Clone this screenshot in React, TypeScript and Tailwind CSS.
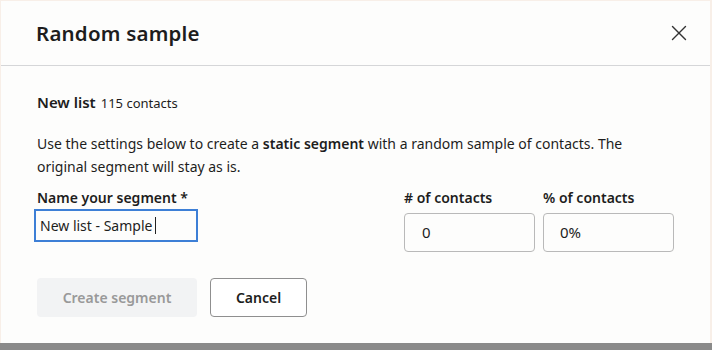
import React from "react";
import { X } from "lucide-react";

export default function App() {
  return (
    <div
      className="w-[712px] h-[350px] flex flex-col bg-[#f8efe8] overflow-hidden"
      style={{ fontFamily: "'Noto Sans', 'Open Sans', sans-serif" }}
    >
      <div className="flex-1 ml-[1px] mt-[1px] mr-[2px] bg-[#fdfdfc] flex flex-col text-[#1d1d1d]">
        {/* Header */}
        <div className="h-[65px] flex items-center justify-between pl-[35px] pr-[18px] border-b border-[#d5d6d8]">
          <h2 className="text-[20.5px] font-semibold tracking-[0.2px]">Random sample</h2>
          <button className="w-[26px] h-[26px] flex items-center justify-center text-[#333]">
            <X className="w-[26px] h-[26px]" strokeWidth={1.3} />
          </button>
        </div>

        {/* Body */}
        <div className="pl-[36px] pr-[36px] pt-[25px]">
          <div className="flex items-baseline gap-[5px] h-[22px]">
            <span className="text-[15px] font-semibold">New list</span>
            <span className="text-[13px]">115 contacts</span>
          </div>

          <p className="mt-[19px] text-[14px] leading-[23px] whitespace-nowrap">
            Use the settings below to create a <span className="font-semibold">static segment</span> with a random
            sample of contacts. The
            <br />
            original segment will stay as is.
          </p>

          <div className="mt-[10px] flex">
            <div className="w-[370px]">
              <label className="block text-[14px] font-semibold leading-[20px]">Name your segment *</label>
              <div className="mt-[1px] -ml-[3px] w-[164px] h-[33px] border-2 border-[#3d7fd6] flex items-center pl-[4px] text-[14px]">
                New list - Sample<span className="ml-[3px] w-[1px] h-[17px] bg-[#222]" />
              </div>
            </div>
            <div className="flex gap-[8px]">
              <div>
                <label className="block text-[14px] font-semibold leading-[20px]">&#35; of contacts</label>
                <div className="mt-[5px] w-[131px] h-[39px] border border-[#b9b9b9] rounded-[4px] flex items-center pl-[17px] text-[15px]">
                  0
                </div>
              </div>
              <div>
                <label className="block text-[14px] font-semibold leading-[20px]">% of contacts</label>
                <div className="mt-[5px] w-[131px] h-[39px] border border-[#b9b9b9] rounded-[4px] flex items-center pl-[16px] text-[15px]">
                  0%
                </div>
              </div>
            </div>
          </div>

          <div className="mt-[26px] flex gap-[13px]">
            <button className="w-[160px] h-[39px] rounded-[4px] bg-[#f2f3f4] text-[#999] text-[14px] font-semibold">
              Create segment
            </button>
            <button className="w-[97px] h-[39px] rounded-[4px] border border-[#8f8f8f] bg-white text-[14px] font-semibold text-[#1d1d1d]">
              Cancel
            </button>
          </div>
        </div>
      </div>
      <div className="h-[7px] bg-[#8a8a8a]" />
    </div>
  );
}
